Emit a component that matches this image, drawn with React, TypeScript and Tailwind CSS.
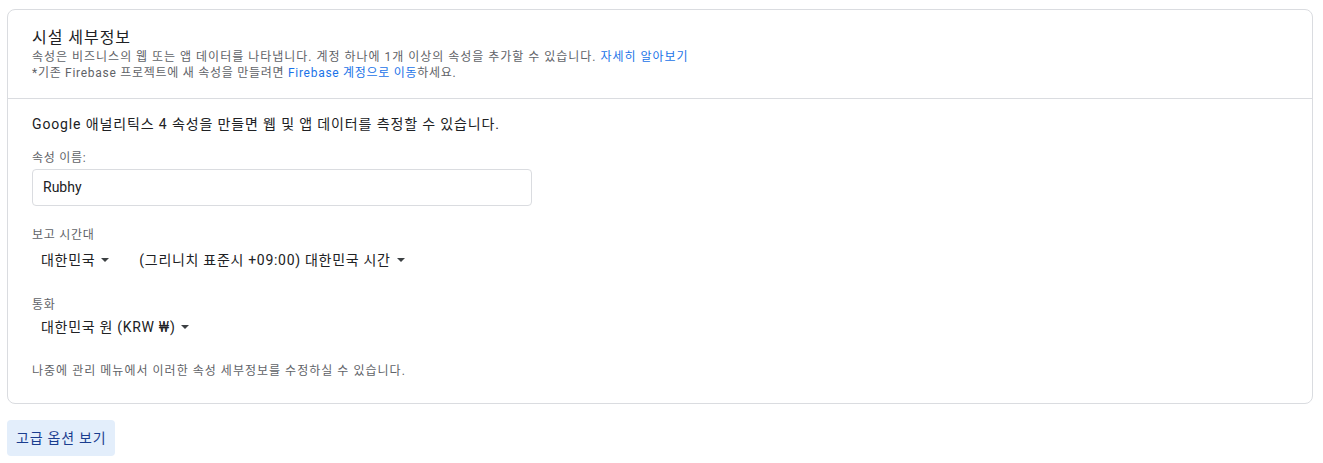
function Caret() {
  return (
    <svg width="8" height="4" viewBox="0 0 8 4" className="ml-[6px] fill-[#3c4043]">
      <path d="M0 0h8L4 4z" />
    </svg>
  );
}

function Select({ label }: { label: string }) {
  return (
    <button className="flex items-center h-[28px] px-[10px] text-[14px] text-[#202124] tracking-[0.05em]">
      {label}
      <Caret />
    </button>
  );
}

export default function App() {
  return (
    <div
      className="w-[1323px] h-[463px] bg-white px-[7px] pt-[9px]"
      style={{ fontFamily: '"Roboto", "Noto Sans CJK KR", sans-serif' }}
    >
      <div className="w-[1306px] h-[395px] rounded-[8px] border border-[#dadce0]">
        <div className="h-[89px] border-b border-[#dadce0] px-[24px] pt-[17px]">
          <h2 className="text-[16px] leading-[22px] text-[#202124] tracking-[0.06em]">시설 세부정보</h2>
          <p className="text-[12px] leading-[16px] text-[#5f6368] tracking-[0.082em]">
            속성은 비즈니스의 웹 또는 앱 데이터를 나타냅니다. 계정 하나에 1개 이상의 속성을 추가할 수 있습니다.{" "}
            <a className="text-[#1a73e8]">자세히 알아보기</a>
          </p>
          <p className="text-[12px] leading-[16px] text-[#5f6368] tracking-[0.06em]">
            *기존 Firebase 프로젝트에 새 속성을 만들려면 <a className="text-[#1a73e8]">Firebase 계정으로 이동</a>하세요.
          </p>
        </div>
        <div className="px-[24px] pt-[15px]">
          <p className="text-[14px] leading-[20px] text-[#202124] tracking-[0.062em]">
            Google 애널리틱스 4 속성을 만들면 웹 및 앱 데이터를 측정할 수 있습니다.
          </p>
          <label className="block mt-[16px] text-[12px] leading-[16px] text-[#5f6368] tracking-[0.06em]">속성 이름:</label>
          <div className="mt-[3px] w-[500px] h-[37px] rounded-[4px] border border-[#dadce0] flex items-center px-[10px] text-[14px] text-[#202124]">
            Rubhy
          </div>
          <label className="block mt-[21px] text-[12px] leading-[16px] text-[#5f6368] tracking-[0.06em]">보고 시간대</label>
          <div className="mt-[3px] flex items-center -ml-[1px] gap-[10px]">
            <Select label="대한민국" />
            <Select label="(그리니치 표준시 +09:00) 대한민국 시간" />
          </div>
          <label className="block mt-[23px] text-[12px] leading-[16px] text-[#5f6368] tracking-[0.06em]">통화</label>
          <div className="mt-[0px] flex items-center -ml-[1px]">
            <Select label="대한민국 원 (KRW ₩)" />
          </div>
          <p className="mt-[22px] text-[12px] leading-[16px] text-[#5f6368] tracking-[0.085em]">
            나중에 관리 메뉴에서 이러한 속성 세부정보를 수정하실 수 있습니다.
          </p>
        </div>
      </div>
      <button className="mt-[16px] h-[36px] px-[9px] rounded-[4px] bg-[#e3eefb] text-[14px] text-[#1a3d8f] tracking-[0.055em]">
        고급 옵션 보기
      </button>
    </div>
  );
}
